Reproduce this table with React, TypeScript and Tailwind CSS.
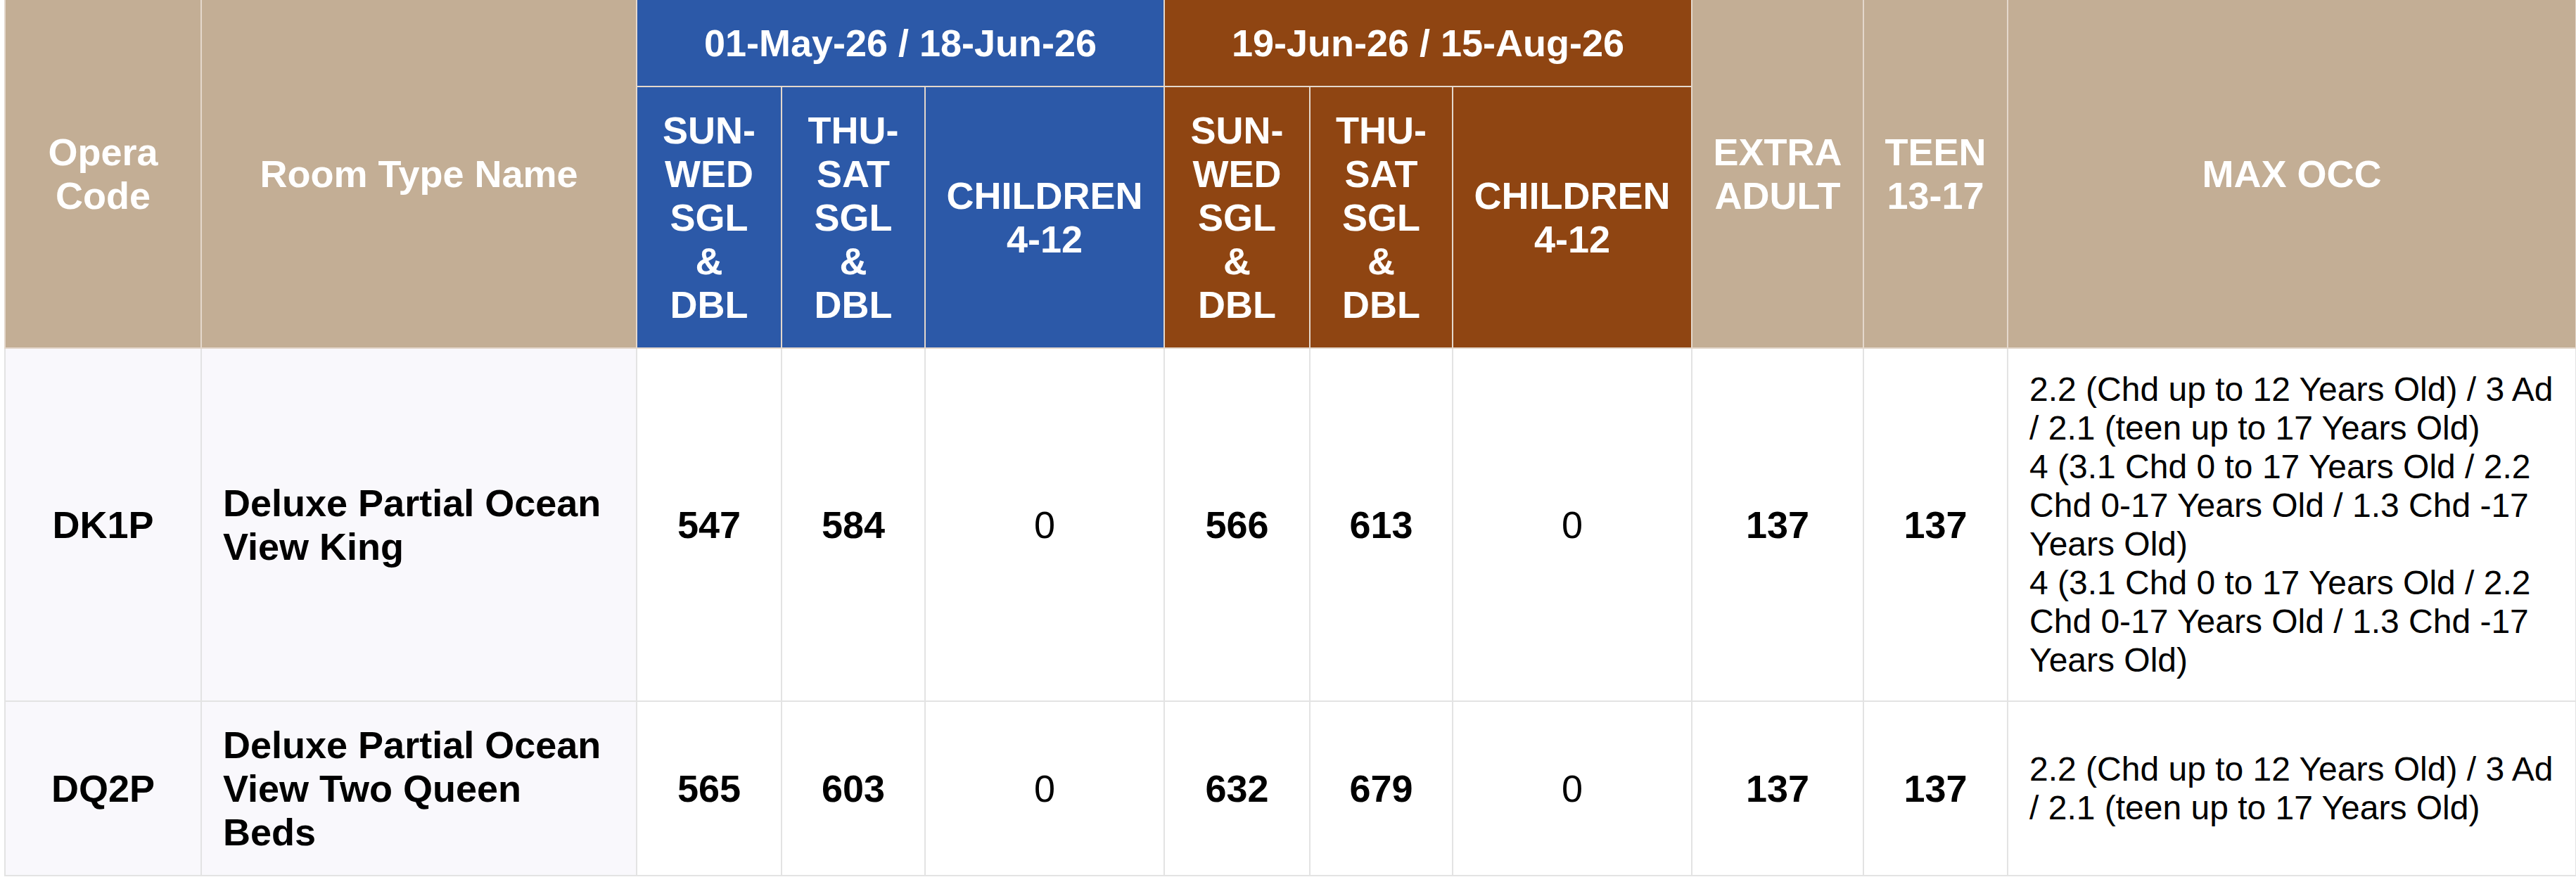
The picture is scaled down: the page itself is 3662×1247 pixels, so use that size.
import React from "react";

const TAN = "bg-[#c3ae95]";
const BLUE = "bg-[#2c59a8]";
const BROWN = "bg-[#8f4512]";

const th = "border-2 border-[#e4d8cc] p-[30px] text-white font-bold text-[54px] leading-[62px] text-center align-middle";
const tdBase = "border-2 border-[#e3e3e3] p-[30px] align-middle text-black";
const num = `${tdBase} text-center font-bold text-[54px] leading-[62px] bg-white`;
const zero = `${tdBase} text-center font-normal text-[54px] leading-[62px] bg-white`;

type Row = {
  code: string;
  name: string;
  a: string[];
  b: string[];
  extra: string;
  teen: string;
  max: string[];
};

const rows: Row[] = [
  {
    code: "DK1P",
    name: "Deluxe Partial Ocean View King",
    a: ["547", "584", "0"],
    b: ["566", "613", "0"],
    extra: "137",
    teen: "137",
    max: [
      "2.2 (Chd up to 12 Years Old) / 3 Ad / 2.1 (teen up to 17 Years Old)",
      "4 (3.1 Chd 0 to 17 Years Old / 2.2 Chd 0-17 Years Old / 1.3 Chd -17 Years Old)",
      "4 (3.1 Chd 0 to 17 Years Old / 2.2 Chd 0-17 Years Old / 1.3 Chd -17 Years Old)",
    ],
  },
  {
    code: "DQ2P",
    name: "Deluxe Partial Ocean View Two Queen Beds",
    a: ["565", "603", "0"],
    b: ["632", "679", "0"],
    extra: "137",
    teen: "137",
    max: ["2.2 (Chd up to 12 Years Old) / 3 Ad / 2.1 (teen up to 17 Years Old)"],
  },
];

function DayHeaders({ bg }: { bg: string }) {
  return (
    <>
      <th className={`${th} ${bg} px-[10px]`}>
        SUN-
        <br />
        WED
        <br />
        SGL
        <br />
        &amp;
        <br />
        DBL
      </th>
      <th className={`${th} ${bg} px-[10px]`}>
        THU-
        <br />
        SAT
        <br />
        SGL
        <br />
        &amp;
        <br />
        DBL
      </th>
      <th className={`${th} ${bg} px-[10px]`}>
        CHILDREN
        <br />
        4-12
      </th>
    </>
  );
}

export default function App() {
  return (
    <div className="bg-white min-h-[1247px] w-[3662px] pl-[6px] font-['Liberation_Sans',Arial,sans-serif]">
      <table className="border-collapse table-fixed w-[3655px] border-t-0">
        <colgroup>
          <col className="w-[279px]" />
          <col className="w-[619px]" />
          <col className="w-[206px]" />
          <col className="w-[204px]" />
          <col className="w-[340px]" />
          <col className="w-[207px]" />
          <col className="w-[203px]" />
          <col className="w-[340px]" />
          <col className="w-[244px]" />
          <col className="w-[205px]" />
          <col className="w-[808px]" />
        </colgroup>
        <thead>
          <tr>
            <th rowSpan={2} className={`${th} ${TAN} border-t-0 px-[10px]`}>
              Opera
              <br />
              Code
            </th>
            <th rowSpan={2} className={`${th} ${TAN} border-t-0`}>
              Room Type Name
            </th>
            <th colSpan={3} className={`${th} ${BLUE} border-t-0`}>
              01-May-26 / 18-Jun-26
            </th>
            <th colSpan={3} className={`${th} ${BROWN} border-t-0`}>
              19-Jun-26 / 15-Aug-26
            </th>
            <th rowSpan={2} className={`${th} ${TAN} border-t-0 px-[10px]`}>
              EXTRA
              <br />
              ADULT
            </th>
            <th rowSpan={2} className={`${th} ${TAN} border-t-0 px-[10px]`}>
              TEEN
              <br />
              13-17
            </th>
            <th rowSpan={2} className={`${th} ${TAN} border-t-0`}>
              MAX OCC
            </th>
          </tr>
          <tr>
            <DayHeaders bg={BLUE} />
            <DayHeaders bg={BROWN} />
          </tr>
        </thead>
        <tbody>
          {rows.map((r) => (
            <tr key={r.code}>
              <td className={`${tdBase} bg-[#f9f8fc] text-center font-bold text-[54px] leading-[62px] px-[10px]`}>
                {r.code}
              </td>
              <td className={`${tdBase} bg-[#f9f8fc] text-left font-bold text-[54px] leading-[62px]`}>
                {r.name}
              </td>
              <td className={num}>{r.a[0]}</td>
              <td className={num}>{r.a[1]}</td>
              <td className={zero}>{r.a[2]}</td>
              <td className={num}>{r.b[0]}</td>
              <td className={num}>{r.b[1]}</td>
              <td className={zero}>{r.b[2]}</td>
              <td className={num}>{r.extra}</td>
              <td className={num}>{r.teen}</td>
              <td className={`${tdBase} bg-white text-left font-normal text-[48px] leading-[55px]`}>
                {r.max.map((m, i) => (
                  <div key={i}>{m}</div>
                ))}
              </td>
            </tr>
          ))}
        </tbody>
      </table>
    </div>
  );
}
